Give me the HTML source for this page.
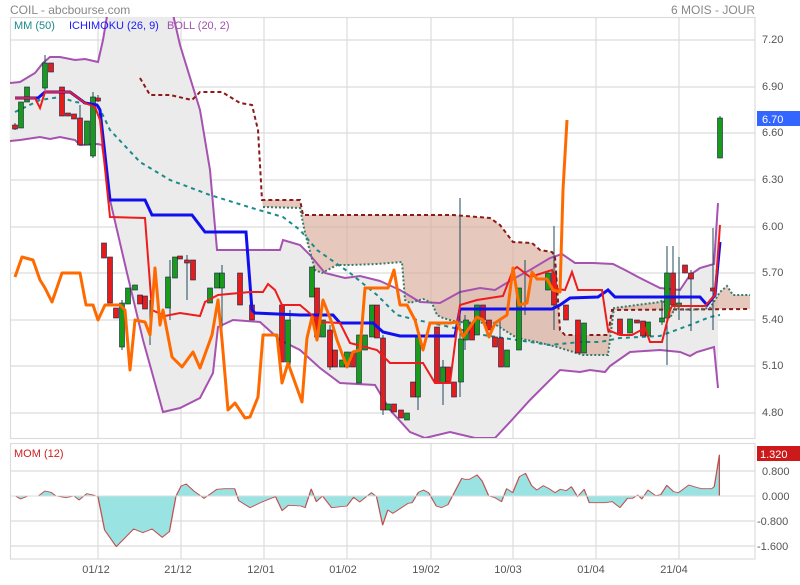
<!DOCTYPE html>
<html><head><meta charset="utf-8"><style>
body{margin:0;background:#fff;width:800px;height:580px;overflow:hidden;font-family:"Liberation Sans",sans-serif}
svg text{font-family:"Liberation Sans",sans-serif}
</style></head><body>
<svg width="800" height="580" viewBox="0 0 800 580" xmlns="http://www.w3.org/2000/svg">
<defs><clipPath id="c"><rect x="10" y="17" width="745" height="421"/></clipPath></defs>
<text x="10" y="14" font-size="12" fill="#888">COIL - abcbourse.com</text>
<text x="755" y="14" font-size="12" fill="#888" text-anchor="end">6 MOIS - JOUR</text>
<g stroke="#dcdcdc" stroke-width="1.2" fill="none">
<rect x="10.5" y="17.5" width="744.5" height="421"/>
<path d="M10 40H755M10 87H755M10 133H755M10 180H755M10 227H755M10 273H755M10 320H755M10 366H755M10 413H755"/>
<path d="M98 17V438M181 17V438M264 17V438M347 17V438M431 17V438M513 17V438M596 17V438M679 17V438"/>
<rect x="10.5" y="443.5" width="744.5" height="115.5"/>
<path d="M10 471H755M10 521H755M10 546H755"/>
<path d="M98 443V559M181 443V559M264 443V559M347 443V559M431 443V559M513 443V559M596 443V559M679 443V559"/>
</g>
<g clip-path="url(#c)">
<polygon fill="#ebebeb" points="10,83 20,82 35,73 43,63 50,57 60,57 75,60 85,59 98,62 103,40 108,10 172,10 180,45 200,110 210,170 217,250 250,250 280,250 283,240 300,245 310,255 325,273 345,278 360,276 380,281 400,290 420,302 440,303 460,292 480,288 495,290 515,278 530,270 550,258 562,254 575,263 593,263 613,264 625,270 640,278 660,288 680,290 690,275 700,268 714,264 718,203 718,388 714,347 697,352 690,356 680,352 660,350 630,352 610,366 605,372 590,370 580,372 560,370 530,400 510,422 495,438 475,438 450,432 425,438 410,432 390,410 375,385 340,383 320,368 300,350 280,340 260,322 233,320 218,327 213,373 200,398 180,408 163,412 143,340 127,273 110,200 102,145 98,144 80,145 75,140 60,137 50,139 40,137 20,140 10,141"/>
<polygon fill="#d9ac98" fill-opacity="0.65" points="262,200 300,200 303,215 310,215 453,215 490,218 500,225 513,242 532,243 540,250 552,252 555,257 560,330 565,335 600,335 608,335 612,310 750,309 750,295 733,295 727,286 720,292 710,308 690,310 675,308 670,318 663,300 660,302 614,308 608,355 583,355 557,347 537,342 517,338 493,323 457,322 443,318 437,315 432,303 423,299 410,303 405,300 402,262 377,264 350,265 337,265 322,273 315,270 305,233 300,208 263,207"/>
<polyline fill="none" stroke="#a652b0" stroke-width="2" points="10,83 20,82 35,73 43,63 50,57 60,57 75,60 85,59 98,62 103,40 108,10"/>
<polyline fill="none" stroke="#a652b0" stroke-width="2" points="172,10 180,45 200,110 210,170 217,250 250,250 280,250 283,240 300,245 310,255 325,273 345,278 360,276 380,281 400,290 420,302 440,303 460,292 480,288 495,290 515,278 530,270 550,258 562,254 575,263 593,263 613,264 625,270 640,278 660,288 680,290 690,275 700,268 714,264 718,203"/>
<polyline fill="none" stroke="#a652b0" stroke-width="2" points="718,388 714,347 697,352 690,356 680,352 660,350 630,352 610,366 605,372 590,370 580,372 560,370 530,400 510,422 495,438 475,438 450,432 425,438 410,432 390,410 375,385 340,383 320,368 300,350 280,340 260,322 233,320 218,327 213,373 200,398 180,408 163,412 143,340 127,273 110,200 102,145 98,144 80,145 75,140 60,137 50,139 40,137 20,140 10,141"/>
<polyline fill="none" stroke="#8b1a1a" stroke-width="2" stroke-dasharray="4,3" points="140,78 150,95 170,95 192,100 200,92 222,92 240,103 252,105 258,130 262,200 300,200 303,215 310,215 453,215 490,218 500,225 513,242 532,243 540,250 552,252 555,257 560,330 565,335 608,335 612,310 750,309"/>
<polyline fill="none" stroke="#3b7a6a" stroke-width="2" stroke-dasharray="2,2" points="263,207 300,208 305,233 315,270 322,273 337,265 350,265 377,264 402,262 405,300 410,303 423,299 432,303 437,315 443,318 457,322 493,323 517,338 537,342 557,347 583,355 608,355 614,308 660,302 663,300 670,318 675,308 690,310 710,308 720,292 727,286 733,295 750,295"/>
<polyline fill="none" stroke="#1a8a8a" stroke-width="2" stroke-dasharray="4,4" points="15,112 40,100 60,97 75,102 98,105 110,130 140,162 170,180 210,195 252,208 283,217 300,230 317,250 350,273 377,295 397,315 417,320 450,327 483,335 517,340 550,345 580,342 600,342 620,338 660,336 690,325 710,317 720,315"/>
<g stroke="#1f4a5a" stroke-width="1">
<path d="M15 123V130M45 55V90M93 92V158M98 95V102M122 300V350M187 255V300M222 265V330M460 198V397M554 226V330M525 260V315M667 246V365M673 246V306M679 257V320M691 270V331M713 228V330M720 116V120M150 300V345M170 260V320M290 310V370M330 325V370M383 335V415M418 330V410M443 360V405M465 315V350M500 320V360M662 302V325M80 105V120"/>
</g>
<g stroke-width="0.6" stroke="#124">
<g fill="#1a9a1a">
<rect x="18.5" y="102" width="5" height="26"/><rect x="24.5" y="87" width="5" height="15"/><rect x="42.5" y="63" width="5" height="25"/><rect x="84.5" y="121" width="5" height="24"/><rect x="90.5" y="97" width="5" height="59"/><rect x="119.5" y="303" width="5" height="44"/><rect x="125.5" y="288" width="5" height="16"/><rect x="132.5" y="285" width="5" height="5"/><rect x="165.5" y="277" width="5" height="31"/><rect x="172.5" y="257" width="5" height="21"/><rect x="207.5" y="288" width="5" height="15"/><rect x="214.5" y="273" width="5" height="15"/><rect x="219.5" y="273" width="5" height="15"/>
<rect x="285.5" y="320" width="5" height="42"/><rect x="309.5" y="267" width="5" height="30"/><rect x="320.5" y="320" width="5" height="17"/><rect x="339.5" y="360" width="5" height="7"/><rect x="344.5" y="352" width="5" height="15"/><rect x="356.5" y="335" width="5" height="48"/><rect x="362.5" y="335" width="5" height="15"/><rect x="369.5" y="305" width="5" height="32"/><rect x="385.5" y="404" width="5" height="6"/><rect x="404.5" y="413" width="5" height="7"/><rect x="415.5" y="337" width="5" height="60"/><rect x="440.5" y="367" width="5" height="16"/><rect x="458.5" y="339" width="5" height="43"/><rect x="463.5" y="320" width="5" height="20"/><rect x="474.5" y="305" width="5" height="30"/><rect x="504.5" y="350" width="5" height="17"/><rect x="516.5" y="288" width="5" height="62"/><rect x="545.5" y="273" width="5" height="17"/><rect x="581.5" y="323" width="5" height="30"/>
<rect x="627.5" y="319" width="5" height="14"/><rect x="645.5" y="322" width="5" height="14"/><rect x="659.5" y="318" width="5" height="4"/><rect x="664.5" y="273" width="5" height="45"/><rect x="676.5" y="303" width="5" height="3"/><rect x="717.5" y="118" width="5" height="40"/>
</g>
<g fill="#e41c1c">
<rect x="12.5" y="125" width="5" height="4"/><rect x="48.5" y="63" width="5" height="9"/><rect x="59.5" y="87" width="5" height="29"/><rect x="65.5" y="113" width="5" height="3"/><rect x="71.5" y="114" width="5" height="5"/><rect x="77.5" y="118" width="5" height="27"/><rect x="95.5" y="98" width="5" height="3"/><rect x="101.5" y="243" width="5" height="15"/><rect x="107.5" y="257" width="5" height="46"/><rect x="113.5" y="308" width="5" height="10"/><rect x="137.5" y="295" width="5" height="9"/><rect x="142.5" y="296" width="5" height="13"/><rect x="177.5" y="256" width="5" height="3"/><rect x="184.5" y="260" width="5" height="3"/><rect x="190.5" y="260" width="5" height="20"/><rect x="237.5" y="273" width="5" height="32"/><rect x="249.5" y="305" width="5" height="15"/>
<rect x="279.5" y="305" width="5" height="57"/><rect x="314.5" y="288" width="5" height="49"/><rect x="327.5" y="330" width="5" height="37"/><rect x="332.5" y="350" width="5" height="17"/><rect x="350.5" y="352" width="5" height="15"/><rect x="374.5" y="305" width="5" height="33"/><rect x="380.5" y="338" width="5" height="72"/><rect x="391.5" y="404" width="5" height="8"/><rect x="398.5" y="410" width="5" height="8"/><rect x="410.5" y="382" width="5" height="15"/><rect x="434.5" y="327" width="5" height="56"/><rect x="445.5" y="367" width="5" height="15"/><rect x="451.5" y="382" width="5" height="15"/><rect x="469.5" y="323" width="5" height="17"/><rect x="480.5" y="305" width="5" height="15"/><rect x="486.5" y="320" width="5" height="10"/><rect x="492.5" y="337" width="5" height="10"/><rect x="498.5" y="338" width="5" height="29"/><rect x="551.5" y="273" width="5" height="32"/><rect x="563.5" y="305" width="5" height="15"/><rect x="575.5" y="320" width="5" height="33"/>
<rect x="617.5" y="319" width="5" height="16"/><rect x="634.5" y="320" width="5" height="3"/><rect x="640.5" y="321" width="5" height="15"/><rect x="670.5" y="273" width="5" height="32"/><rect x="682.5" y="265" width="5" height="8"/><rect x="688.5" y="273" width="5" height="6"/><rect x="710.5" y="288" width="5" height="3"/>
</g></g>
<polyline fill="none" stroke="#1010ee" stroke-width="3" points="15,98 38,98 45,92 70,92 85,103 97,105 100,110 110,200 145,200 152,215 192,215 205,232 246,232 252,310 255,313 300,315 333,315 340,323 373,323 383,332 400,336 455,336 460,309 552,309 560,305 570,298 598,297 608,290 615,297 700,297 707,305 715,295 720,242"/>
<polyline fill="none" stroke="#ee1c1c" stroke-width="2" points="15,98 35,98 40,108 45,92 70,92 85,103 95,107 100,120 110,217 145,218 152,310 165,316 180,313 200,316 205,302 218,295 250,292 263,292 268,284 275,290 282,305 300,305 320,322 340,323 350,343 377,350 390,363 423,363 435,383 450,383 460,305 477,300 503,296 513,270 517,267 530,277 552,270 557,289 565,290 572,272 578,290 602,290 608,330 620,335 632,335 645,328 650,342 662,342 670,310 672,306 705,306 715,295 720,225"/>
<polyline fill="none" stroke="#ff6a00" stroke-width="3" stroke-linejoin="round" points="15,277 22,257 33,260 40,280 45,288 52,302 62,273 80,273 86,305 93,305 98,320 105,305 120,305 125,310 130,370 135,320 145,322 150,335 155,268 160,325 163,310 172,357 182,367 193,352 200,368 212,335 218,300 222,340 228,410 235,403 245,418 250,417 258,397 263,335 277,335 282,383 288,363 302,402 307,338 312,317 317,340 323,300 332,323 337,340 347,367 353,352 360,350 365,288 388,288 394,270 400,305 407,305 415,320 423,350 430,323 450,323 457,322 463,337 470,327 477,317 483,320 489,337 495,323 507,315 513,268 519,305 527,303 532,272 537,279 547,279 553,290 560,292 563,190 567,120"/>
</g>
<text x="14" y="29" font-size="11" fill="#1a8a8a">MM (50)</text>
<text x="69" y="29" font-size="11" fill="#1a1aff">ICHIMOKU (26, 9)</text>
<text x="167" y="29" font-size="11" fill="#a050b0">BOLL (20, 2)</text>
<g font-size="11" fill="#555">
<text x="762" y="43">7.20</text><text x="762" y="90">6.90</text><text x="762" y="136">6.60</text><text x="762" y="183">6.30</text><text x="762" y="230">6.00</text><text x="762" y="276">5.70</text><text x="762" y="323">5.40</text><text x="762" y="369">5.10</text><text x="762" y="416">4.80</text>
<text x="762" y="475">0.800</text><text x="762" y="500">0.000</text><text x="757" y="525">-0.800</text><text x="757" y="550">-1.600</text>
</g>
<rect x="757" y="111" width="43" height="15" fill="#3366ff"/>
<text x="762" y="123" font-size="11" fill="#fff">6.70</text>
<rect x="757" y="446" width="43" height="15" fill="#cc1a1a"/>
<text x="760" y="458" font-size="11" fill="#fff">1.320</text>
<text x="14" y="457" font-size="11" fill="#cc2222">MOM (12)</text>
<g transform="translate(0,430) scale(0.5102,0.3333)">
<polygon fill="#99e3e3" stroke="#c05050" stroke-width="2.5" stroke-linejoin="round" points="30,198 40,207 55,198 75,198 88,183 100,187 110,198 130,203 145,198 155,210 170,191 185,196 192,200 205,300 228,350 262,297 280,308 298,297 318,322 332,305 345,198 355,168 365,162 380,183 400,205 425,178 440,176 460,176 468,212 490,233 515,215 540,200 553,242 565,226 590,228 598,233 610,177 620,215 632,198 650,233 680,228 693,202 705,216 728,188 738,200 750,285 760,240 770,250 800,220 808,218 820,187 830,180 840,188 855,228 865,233 878,224 905,145 912,148 920,148 935,135 945,153 958,198 970,203 983,215 993,176 1005,188 1018,140 1030,130 1042,167 1052,180 1065,167 1075,175 1088,188 1098,178 1110,182 1120,170 1132,200 1145,178 1155,218 1185,218 1200,215 1215,233 1230,205 1240,205 1250,195 1258,207 1270,180 1285,197 1295,194 1307,166 1320,185 1330,188 1350,165 1365,172 1375,176 1395,176 1400,170 1410,75 1410,198"/>
</g>
<line x1="10" y1="496" x2="755" y2="496" stroke="#dcdcdc" stroke-width="1"/>
<g font-size="11" fill="#555" text-anchor="middle">
<text x="96" y="573">01/12</text><text x="178" y="573">21/12</text><text x="261" y="573">12/01</text><text x="343" y="573">01/02</text><text x="426" y="573">19/02</text><text x="508" y="573">10/03</text><text x="591" y="573">01/04</text><text x="674" y="573">21/04</text>
</g>
</svg>
</body></html>
